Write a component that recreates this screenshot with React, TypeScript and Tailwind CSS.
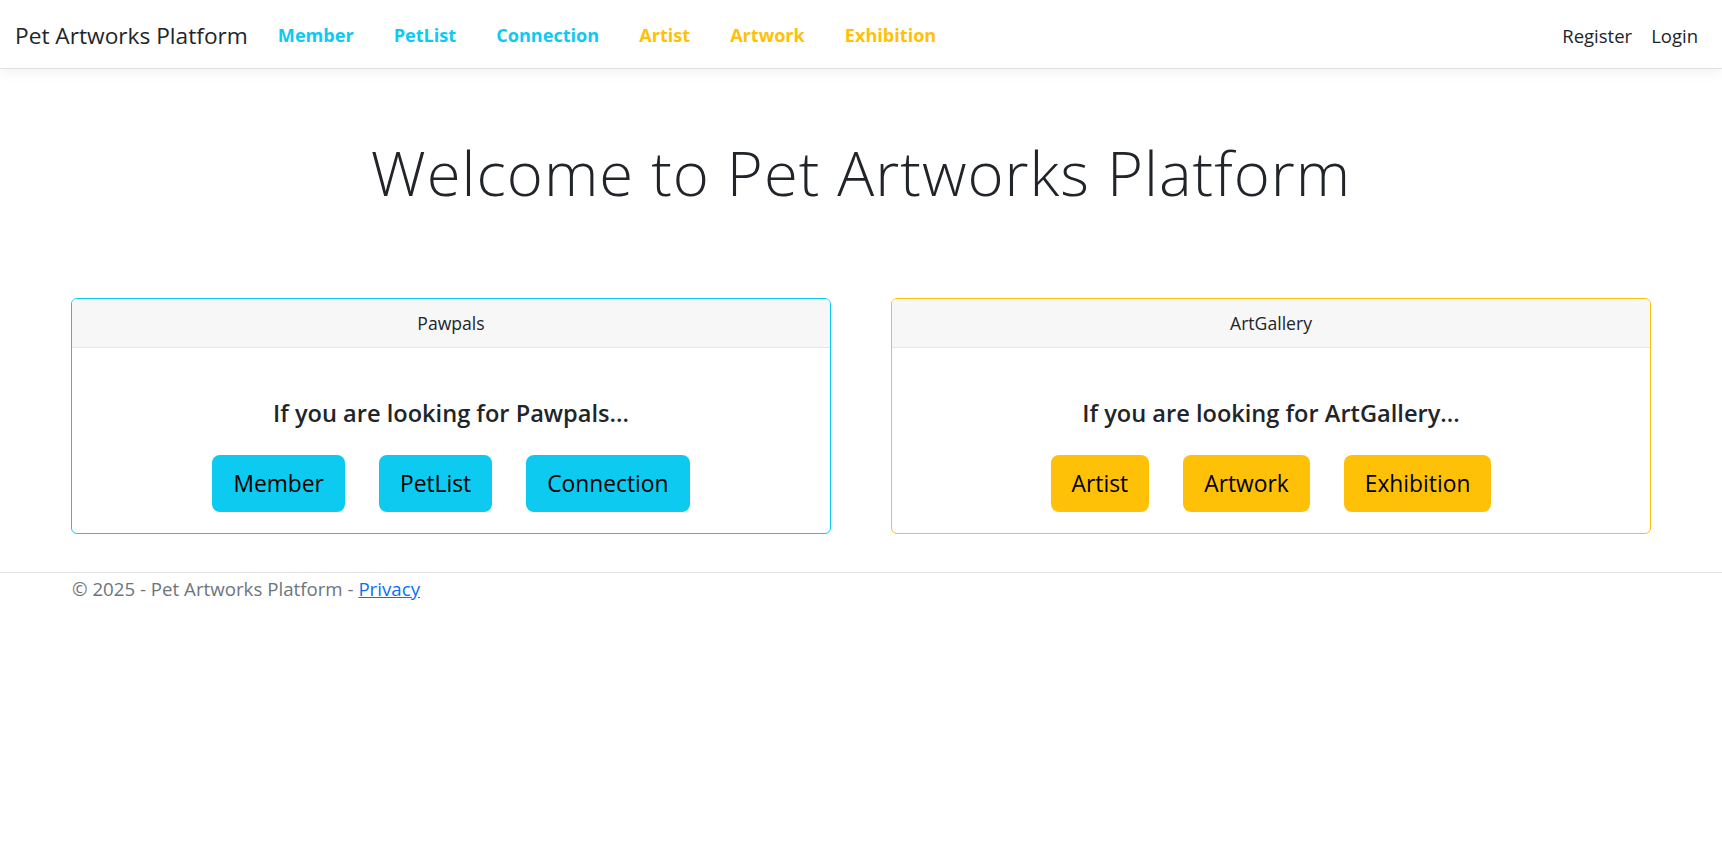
import React from "react";

const font = { fontFamily: '"Open Sans", "Noto Sans", sans-serif' };

function Card({
  title,
  color,
  links,
}: {
  title: string;
  color: "info" | "warning";
  links: string[];
}) {
  const border = color === "info" ? "border-[#0dcaf0]" : "border-[#ffc107]";
  const btn = color === "info" ? "bg-[#0dcaf0]" : "bg-[#ffc107]";
  return (
    <div className={`border ${border} rounded-[6px] overflow-hidden bg-white`}>
      <div className="h-[49px] bg-[#f7f7f7] border-b border-[#e6e6e6] flex items-center justify-center text-[17.6px] text-[#212529]">
        {title}
      </div>
      <div className="pt-[50px] pb-[21px] flex flex-col items-center">
        <div className="text-[23.6px] leading-[30px] font-semibold text-[#212529]">
          If you are looking for {title}...
        </div>
        <div className="mt-[27px] flex gap-[34px]">
          {links.map((l) => (
            <button
              key={l}
              className={`${btn} h-[57px] px-[21px] pt-[2px] rounded-[8px] text-[22.8px] text-black`}
            >
              {l}
            </button>
          ))}
        </div>
      </div>
    </div>
  );
}

export default function App() {
  return (
    <div className="min-h-[866px] bg-white text-[#212529]" style={font}>
      <nav className="h-[69px] pt-[4px] border-b border-[#dee2e6] shadow-[0_4px_12px_rgba(0,0,0,0.05)] flex items-center pl-[15px] pr-[24px]">
        <span className="text-[22.7px] text-[#212529]">Pet Artworks Platform</span>
        <div className="ml-[30px] flex gap-[40px] text-[18.1px] font-bold">
          <span className="text-[#0dcaf0]">Member</span>
          <span className="text-[#0dcaf0]">PetList</span>
          <span className="text-[#0dcaf0]">Connection</span>
          <span className="text-[#ffc107]">Artist</span>
          <span className="text-[#ffc107]">Artwork</span>
          <span className="text-[#ffc107]">Exhibition</span>
        </div>
        <div className="ml-auto flex gap-[19px] text-[18.5px] text-[#212529]">
          <span>Register</span>
          <span>Login</span>
        </div>
      </nav>
      <main className="px-[71px]">
        <h1 className="mt-[68px] text-center text-[61.6px] leading-[70px] tracking-[1px] font-light text-[#212529]">
          Welcome to Pet Artworks Platform
        </h1>
        <div className="mt-[91px] grid grid-cols-2 gap-[60px]">
          <Card title="Pawpals" color="info" links={["Member", "PetList", "Connection"]} />
          <Card title="ArtGallery" color="warning" links={["Artist", "Artwork", "Exhibition"]} />
        </div>
      </main>
      <footer className="mt-[38px] border-t border-[#dee2e6]">
        <div className="px-[72px] h-[32px] flex items-center text-[18.7px] text-[#6c757d]">
          <span>© 2025 - Pet Artworks Platform -&nbsp;</span>
          <a href="#" className="text-[#0d6efd] underline">
            Privacy
          </a>
        </div>
      </footer>
    </div>
  );
}
